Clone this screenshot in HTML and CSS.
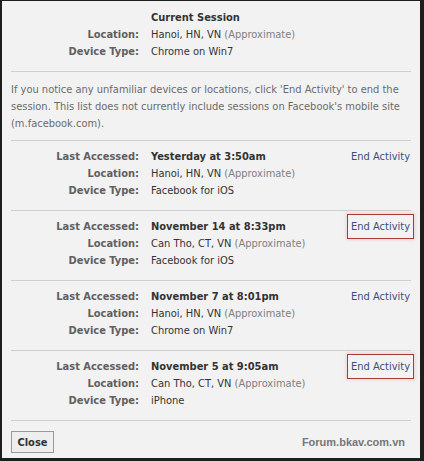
FILE: index.html
```html
<!DOCTYPE html>
<html>
<head>
<meta charset="utf-8">
<link rel="stylesheet" href="styles.css">
</head>
<body>
<div class="dialog">
  <div class="content">
    <div class="block first">
      <div class="label"></div><div class="value strong">Current Session</div><div class="action"></div>
      <div class="label">Location:</div><div class="value">Hanoi, HN, VN <span class="approx">(Approximate)</span></div><div class="action"></div>
      <div class="label">Device Type:</div><div class="value">Chrome on Win7</div><div class="action"></div>
    </div>
    <p class="note">If you notice any unfamiliar devices or locations, click 'End Activity' to end the<br>session. This list does not currently include sessions on Facebook's mobile site<br>(m.facebook.com).</p>
    <div class="block">
      <div class="label">Last Accessed:</div><div class="value strong">Yesterday at 3:50am</div><div class="action"><a class="link">End Activity</a></div>
      <div class="label">Location:</div><div class="value">Hanoi, HN, VN <span class="approx">(Approximate)</span></div><div class="action"></div>
      <div class="label">Device Type:</div><div class="value">Facebook for iOS</div><div class="action"></div>
    </div>
    <div class="block">
      <div class="label">Last Accessed:</div><div class="value strong">November 14 at 8:33pm</div><div class="action"><a class="link marked">End Activity</a></div>
      <div class="label">Location:</div><div class="value">Can Tho, CT, VN <span class="approx">(Approximate)</span></div><div class="action"></div>
      <div class="label">Device Type:</div><div class="value">Facebook for iOS</div><div class="action"></div>
    </div>
    <div class="block">
      <div class="label">Last Accessed:</div><div class="value strong">November 7 at 8:01pm</div><div class="action"><a class="link">End Activity</a></div>
      <div class="label">Location:</div><div class="value">Hanoi, HN, VN <span class="approx">(Approximate)</span></div><div class="action"></div>
      <div class="label">Device Type:</div><div class="value">Chrome on Win7</div><div class="action"></div>
    </div>
    <div class="block">
      <div class="label">Last Accessed:</div><div class="value strong">November 5 at 9:05am</div><div class="action"><a class="link marked">End Activity</a></div>
      <div class="label">Location:</div><div class="value">Can Tho, CT, VN <span class="approx">(Approximate)</span></div><div class="action"></div>
      <div class="label">Device Type:</div><div class="value">iPhone</div><div class="action"></div>
    </div>
    <div class="footer">
      <button class="close">Close</button>
      <span class="brand">Forum.bkav.com.vn</span>
    </div>
  </div>
</div>
</body>
</html>
```

FILE: styles.css
```css
html, body {
  margin: 0;
  padding: 0;
}
.dialog {
  box-sizing: border-box;
  width: 424px;
  height: 461px;
  background: #f2f2f2;
  border-style: solid;
  border-color: #1e1e1e;
  border-width: 1px 4px 3px 2px;
  font-family: "DejaVu Sans Condensed", "DejaVu Sans", sans-serif;
  font-size: 11px;
  color: #333;
  overflow: hidden;
}
.content {
  width: 400px;
  margin-left: 9px;
}
.block {
  display: grid;
  grid-template-columns: 128px 1fr auto;
  column-gap: 12px;
  grid-auto-rows: 17px;
  line-height: 17px;
  border-top: 1px solid #cfcfcf;
  padding: 7px 0 11px;
}
.block.first {
  border-top: none;
  padding: 8px 0 11px;
}
.label {
  text-align: right;
  font-weight: bold;
  color: #606060;
  white-space: nowrap;
}
.value {
  white-space: nowrap;
}
.strong {
  font-weight: bold;
  color: #333;
}
.approx {
  color: #808080;
}
.action {
  text-align: right;
  padding-right: 1px;
}
.link {
  display: inline-block;
  color: #3b4f7e;
  line-height: 17px;
  cursor: pointer;
}
.link.marked {
  box-shadow: 0 0 0 3px #f2f2f2, 0 0 0 4px #a83a3a, 0 0 3px 5px rgba(240,150,150,0.35);
}
.note {
  margin: 0;
  border-top: 1px solid #cfcfcf;
  padding: 9px 0 8px;
  line-height: 17px;
  color: #6a6a6a;
  white-space: nowrap;
}
.footer {
  border-top: 1px solid #cfcfcf;
  padding-top: 10px;
  display: flex;
  align-items: center;
  justify-content: space-between;
}
.close {
  width: 43px;
  height: 22px;
  padding: 0;
  background: #eeeeee;
  border: 1px solid #9a9a9a;
  border-radius: 0;
  font-family: "DejaVu Sans Condensed", "DejaVu Sans", sans-serif;
  font-size: 11px;
  font-weight: bold;
  color: #333;
}
.brand {
  font-family: "Liberation Sans", Arial, sans-serif;
  font-weight: bold;
  font-size: 11px;
  color: #777;
  margin-right: 6px;
}
```
